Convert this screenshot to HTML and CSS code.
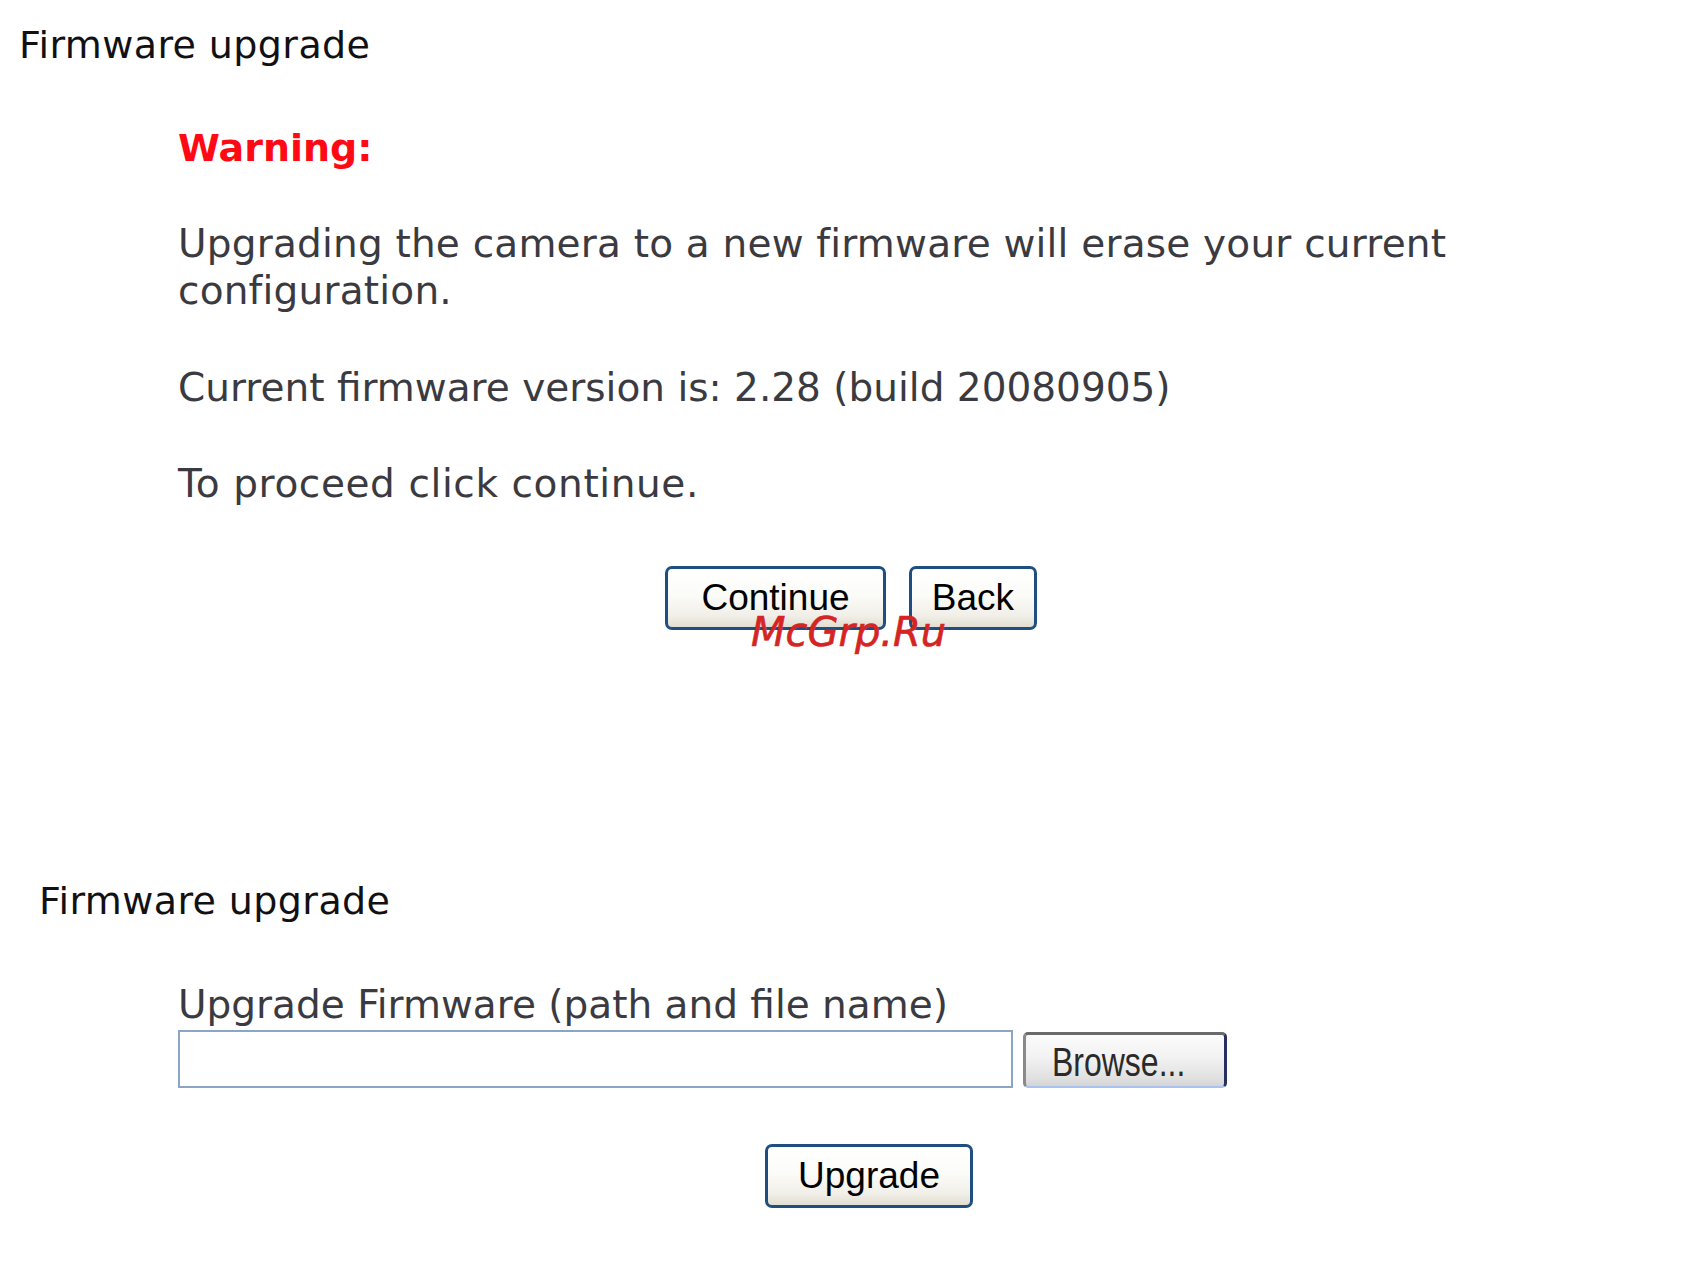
FILE: index.html
```html
<!DOCTYPE html>
<html lang="en">
<head>
<meta charset="utf-8">
<title>Firmware upgrade</title>
<link rel="stylesheet" href="styles.css">
</head>
<body>
<div class="page">
  <section class="panel">
    <h1 class="title title-first">Firmware upgrade</h1>
    <div class="content content-confirm">
      <p class="warning">Warning:</p>
      <p class="text text-erase">Upgrading the camera to a new firmware will erase your current configuration.</p>
      <p class="text text-version">Current firmware version is: 2.28 (build 20080905)</p>
      <p class="text text-proceed">To proceed click continue.</p>
      <div class="actions actions-confirm">
        <button class="btn btn-continue" type="button">Continue</button>
        <button class="btn btn-back" type="button">Back</button>
        <span class="watermark">McGrp.Ru</span>
      </div>
    </div>
  </section>

  <section class="panel panel-upload">
    <h1 class="title title-second">Firmware upgrade</h1>
    <div class="content content-upload">
      <label class="text field-label" for="fw">Upgrade Firmware (path and file name)</label>
      <div class="file-row">
        <input class="file-path" id="fw" type="text">
        <button class="browse" type="button"><span class="browse-label">Browse...</span></button>
      </div>
      <div class="actions actions-upload">
        <button class="btn btn-upgrade" type="button">Upgrade</button>
      </div>
    </div>
  </section>
</div>
</body>
</html>
```

FILE: styles.css
```css
html, body {
  margin: 0;
  padding: 0;
  background: #ffffff;
}

.page {
  width: 1689px;
  font-family: "DejaVu Sans", Verdana, sans-serif;
}

.title {
  margin: 0;
  font-weight: normal;
  font-size: 38px;
  line-height: 47px;
  letter-spacing: 0.4px;
  color: #111114;
}

.title-first {
  padding-top: 22px;
  padding-left: 19px;
}

.title-second {
  margin-top: 248px;
  padding-left: 39px;
}

.content {
  margin-left: 178px;
  display: flex;
  flex-direction: column;
}

.content-confirm {
  width: 1346px;
}

.content-upload {
  width: 1382px;
}

.warning {
  margin: 56px 0 0 0;
  font-size: 38px;
  line-height: 47px;
  font-weight: bold;
  color: #ff0a14;
}

.text {
  margin: 0;
  font-size: 39px;
  line-height: 47px;
  letter-spacing: 0.2px;
  color: #3a3a40;
}

.text-erase {
  margin-top: 48px;
}

.text-version {
  margin-top: 50px;
  letter-spacing: 0;
}

.text-proceed {
  margin-top: 49px;
  letter-spacing: 0.6px;
}

.actions {
  position: relative;
  display: flex;
  justify-content: center;
  gap: 23px;
}

.actions-confirm {
  margin-top: 59px;
}

.actions-upload {
  margin-top: 56px;
}

.btn {
  height: 64px;
  padding: 0;
  font-family: "Liberation Sans", Arial, sans-serif;
  font-size: 37px;
  color: #000000;
  border: 3px solid #1f4f80;
  border-radius: 7px;
  background: linear-gradient(#ffffff 0%, #fbfbf8 45%, #f1efe8 80%, #e2ded2 100%);
  box-sizing: border-box;
}

.btn-continue {
  width: 221px;
}

.btn-back {
  width: 128px;
}

.btn-upgrade {
  width: 208px;
}

.watermark {
  position: absolute;
  left: 573px;
  top: 46px;
  font-family: "DejaVu Sans", sans-serif;
  font-style: oblique;
  font-size: 40px;
  line-height: 40px;
  color: #d42424;
  white-space: nowrap;
  -webkit-text-stroke: 0.6px #d42424;
}

.field-label {
  display: block;
  margin-top: 56px;
  letter-spacing: 0;
}

.file-row {
  display: flex;
  align-items: flex-end;
  gap: 10px;
  margin-top: 2px;
}

.file-path {
  width: 835px;
  height: 58px;
  margin: 0;
  padding: 0;
  box-sizing: border-box;
  border: 2px solid #8ba5c5;
  background: #ffffff;
}

.browse {
  width: 204px;
  height: 56px;
  padding: 0 0 0 8px;
  box-sizing: border-box;
  font-family: "Liberation Sans", Arial, sans-serif;
  font-size: 41px;
  line-height: 50px;
  text-align: left;
  color: #2a2a2a;
  border-style: solid;
  border-width: 3px 3px 2px 3px;
  border-color: #6a6a6a #27305e #a9c2f0 #8a8a8a;
  border-radius: 5px;
  background: linear-gradient(#fbfbfb 0%, #f2f2f2 45%, #e0e0e0 85%, #d4d4d4 100%);
  overflow: hidden;
}

.browse-label {
  display: inline-block;
  transform: scaleX(0.78);
  transform-origin: left center;
  margin-left: 18px;
  margin-top: 2px;
}
```
